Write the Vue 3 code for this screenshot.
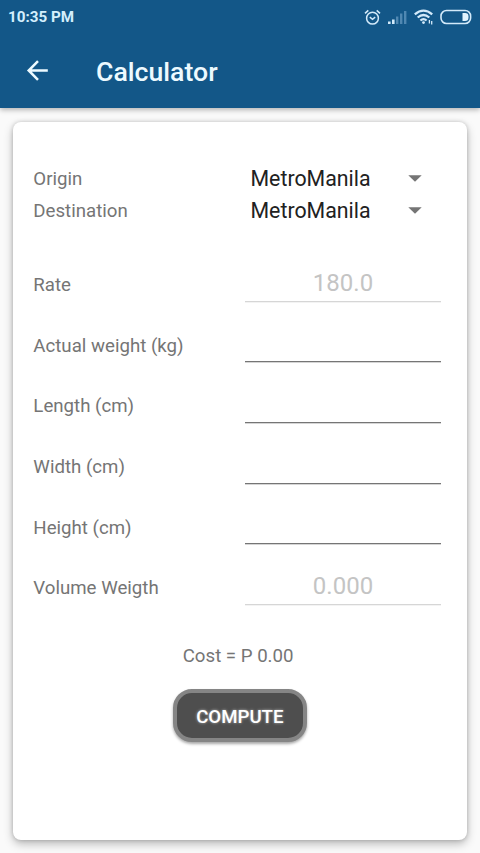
<script setup>
import { reactive, ref } from 'vue'

const places = [
  { label: 'Origin', value: 'MetroManila' },
  { label: 'Destination', value: 'MetroManila' },
]

const fields = reactive([
  { label: 'Rate', value: '180.0', disabled: true },
  { label: 'Actual weight (kg)', value: '', disabled: false },
  { label: 'Length (cm)', value: '', disabled: false },
  { label: 'Width (cm)', value: '', disabled: false },
  { label: 'Height (cm)', value: '', disabled: false },
  { label: 'Volume Weigth', value: '0.000', disabled: true },
])

const cost = ref('0.00')

function compute() {
  const [rate, weight, length, width, height, volume] = fields
  const volumetric = (length.value * width.value * height.value) / 3500
  volume.value = volumetric.toFixed(3)
  cost.value = (Math.max(volumetric, Number(weight.value)) * rate.value).toFixed(2)
}
</script>

<template>
  <div class="screen">
    <header class="header">
      <div class="status">
        <span class="time">10:35 PM</span>
        <div class="indicators">
          <svg class="alarm" width="17" height="17" viewBox="0 0 17 17" fill="none" stroke="#d3eafa" stroke-width="1.5">
            <circle cx="8.5" cy="9.2" r="5.9" />
            <path d="M5.8 8.2 8.5 10.4 11.2 8.2" />
            <path d="M1 4.3 4.3 1.4M12.7 1.4 16 4.3" stroke-width="1.6" />
          </svg>
          <svg class="signal" width="19" height="14" viewBox="0 0 19 14">
            <path d="M0 14v-2.5h2.6V14zM4 14V9.5h2.6V14z" fill="#d3eafa" />
            <path d="M8 14V6.5h2.4V14zM12 14V3.5h2.4V14zM16 14V1h2.4v13z" fill="#5088b2" />
          </svg>
          <svg class="wifi" width="20" height="16" viewBox="0 0 20 16" fill="none" stroke="#d3eafa">
            <path d="M.8 5.4Q9.5-2.2 18.2 5.4" stroke-width="2.3" />
            <path d="M3.7 8.5Q9.5 3.4 15.3 8.5" stroke-width="2.3" />
            <path d="M6.4 11.5Q9.5 8.8 12.6 11.5" stroke-width="2.3" />
            <circle cx="9.5" cy="13.6" r="1.4" fill="#d3eafa" stroke="none" />
            <path d="M15.4 14.5V11M17.7 12v3.5" stroke-width="1.3" />
          </svg>
          <svg class="battery" width="32" height="16" viewBox="0 0 32 16">
            <rect x="1" y="1.5" width="29.6" height="13" rx="5.5" fill="none" stroke="#d3eafa" stroke-width="1.6" />
            <path d="M22.5 4h2.6q3.4 0 3.4 3.2v1.6q0 3.2-3.4 3.2h-2.6z" fill="#e2f4ff" />
          </svg>
        </div>
      </div>
      <div class="toolbar">
        <svg class="back" width="22" height="22" viewBox="0 0 22 22" fill="none" stroke="#edfaff" stroke-width="2.5">
          <path d="M21.8 10.5H2.6M12 1.2 2.7 10.5l9.3 9.3" />
        </svg>
        <h1 class="title">Calculator</h1>
      </div>
    </header>

    <main class="card">
      <div v-for="place in places" :key="place.label" class="place">
        <span class="label">{{ place.label }}</span>
        <div class="spinner">
          <span>{{ place.value }}</span>
          <svg width="14" height="7" viewBox="0 0 14 7"><path d="M.3.2h13.4L7 6.8z" fill="#757575" /></svg>
        </div>
      </div>

      <div class="fields">
        <label v-for="field in fields" :key="field.label" class="field">
          <span class="label">{{ field.label }}</span>
          <input v-model="field.value" class="input" :disabled="field.disabled" />
        </label>
      </div>

      <p class="cost">Cost = P {{ cost }}</p>
      <button class="compute" type="button" @click="compute">COMPUTE</button>
    </main>
  </div>
</template>

<style>
body {
  background: #fafafa;
}
</style>

<style scoped>
.screen {
  display: flex;
  flex-direction: column;
  box-sizing: border-box;
  height: 853px;
  overflow: hidden;
  background: #fafafa;
  color: #757575;
  font-family: Roboto, "Liberation Sans", sans-serif;
}

.header {
  flex: none;
  height: 108px;
  background: #135788;
  box-shadow: 0 2px 5px rgba(0, 0, 0, 0.28);
}

.status {
  display: flex;
  align-items: center;
  justify-content: space-between;
  height: 34px;
  padding: 0 8px;
}

.time {
  color: #d3effd;
  font-size: 15.2px;
  font-weight: 700;
  line-height: 34px;
}

.indicators {
  display: flex;
  align-items: center;
}

.signal {
  margin-left: 7px;
}

.wifi {
  margin-left: 7px;
}

.battery {
  margin-left: 6px;
}

.toolbar {
  display: flex;
  align-items: center;
  height: 74px;
  padding-left: 26px;
}

.title {
  margin: 2px 0 0 48px;
  color: #edfaff;
  font-size: 26.67px;
  font-weight: 500;
  line-height: 32px;
}

.card {
  display: flex;
  flex-direction: column;
  box-sizing: border-box;
  height: 718px;
  margin: 13.5px 13.33px 0 13.33px;
  padding: 41.5px 25.67px 0 20px;
  border-radius: 8px;
  background: #fff;
  box-shadow: 0 4px 10px rgba(0, 0, 0, 0.26), 0 0 4px rgba(0, 0, 0, 0.18);
}

.label {
  flex: none;
  width: 211.67px;
  font-size: 18.67px;
  line-height: 24px;
}

.place {
  display: flex;
  align-items: center;
  height: 32px;
}

.place svg {
  margin-bottom: 2px;
}

.spinner {
  display: flex;
  flex: 1;
  align-items: center;
  justify-content: space-between;
  padding: 0 19px 0 5.5px;
  color: #212121;
  font-size: 21.33px;
  line-height: 26px;
}

.fields {
  display: grid;
  grid-auto-rows: 60.67px;
  margin-top: 27.3px;
}

.field {
  display: flex;
  align-items: center;
}

.field .label {
  padding-top: 1px;
}

.input {
  box-sizing: border-box;
  width: 196px;
  height: 40px;
  margin-bottom: 6px;
  padding: 3px 0 0;
  border: 0;
  border-bottom: 1px solid #757575;
  border-radius: 0;
  outline: 0;
  background: transparent;
  box-shadow: 0 1px 0 rgba(117, 117, 117, 0.3);
  color: #212121;
  font: 24px/32px Roboto, "Liberation Sans", sans-serif;
  text-align: center;
}

.input:disabled {
  border-bottom-color: #d6d6d6;
  box-shadow: 0 1px 0 #f3f3f3;
  color: #c4c4c4;
}

.cost {
  margin: 24.5px 0 0 149.4px;
  font-size: 18.67px;
  line-height: 26px;
}

.compute {
  box-sizing: border-box;
  width: 134px;
  height: 53px;
  margin: 20px 0 0 139.5px;
  padding: 3px 0 0;
  border: 4px solid #858585;
  border-radius: 19px;
  background: #4e4e4e;
  box-shadow: 0 2px 3px rgba(0, 0, 0, 0.35);
  color: #fff;
  font: 500 18.67px/24px Roboto, "Liberation Sans", sans-serif;
  text-shadow: 0 0 3px rgba(255, 255, 255, 0.6);
}
</style>
